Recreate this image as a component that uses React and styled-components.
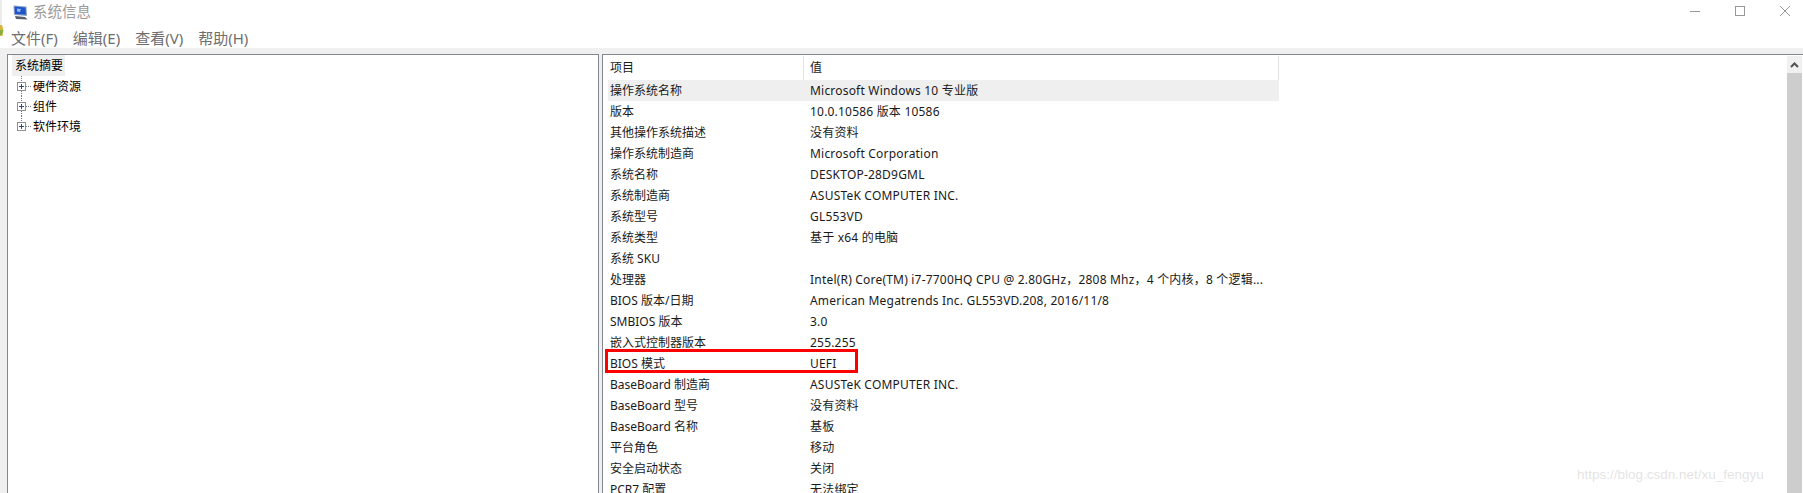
import React from "react";
import styled, { createGlobalStyle } from "styled-components";

const CJK = `"Noto Sans", "Noto Sans CJK SC", sans-serif`;

const rows = [
  ["操作系统名称", "Microsoft Windows 10 专业版"],
  ["版本", "10.0.10586 版本 10586"],
  ["其他操作系统描述", "没有资料"],
  ["操作系统制造商", "Microsoft Corporation"],
  ["系统名称", "DESKTOP-28D9GML"],
  ["系统制造商", "ASUSTeK COMPUTER INC."],
  ["系统型号", "GL553VD"],
  ["系统类型", "基于 x64 的电脑"],
  ["系统 SKU", ""],
  ["处理器", "Intel(R) Core(TM) i7-7700HQ CPU @ 2.80GHz，2808 Mhz，4 个内核，8 个逻辑..."],
  ["BIOS 版本/日期", "American Megatrends Inc. GL553VD.208, 2016/11/8"],
  ["SMBIOS 版本", "3.0"],
  ["嵌入式控制器版本", "255.255"],
  ["BIOS 模式", "UEFI"],
  ["BaseBoard 制造商", "ASUSTeK COMPUTER INC."],
  ["BaseBoard 型号", "没有资料"],
  ["BaseBoard 名称", "基板"],
  ["平台角色", "移动"],
  ["安全启动状态", "关闭"],
  ["PCR7 配置", "无法绑定"],
];

const tree = ["硬件资源", "组件", "软件环境"];
const menus = ["文件(F)", "编辑(E)", "查看(V)", "帮助(H)"];

const GlobalStyle = createGlobalStyle`
  html, body {
    margin: 0;
    padding: 0;
    background: #fff;
    overflow: hidden;
  }
`;

const Page = styled.div`
  width: 1803px;
  height: 493px;
  display: flex;
  flex-direction: column;
  overflow: hidden;
  position: relative;
  font-family: ${CJK};
  font-size: 12px;
  color: #1a1a1a;
`;

const TitleBar = styled.div`
  height: 24px;
  display: flex;
  align-items: center;
  padding-left: 13px;
  gap: 5px;
  flex: none;
`;

const Title = styled.span`
  font-size: 14.5px;
  line-height: 20px;
  padding-bottom: 2px;
  color: #9a9a9a;
`;

const WindowButtons = styled.div`
  margin-left: auto;
  display: flex;
  align-items: center;
  gap: 35px;
  padding: 0 13px 2px 0;
`;

const MenuBar = styled.div`
  height: 24px;
  display: flex;
  align-items: center;
  gap: 15px;
  padding: 3px 0 0 11px;
  box-sizing: border-box;
  flex: none;
  font-size: 15px;
  color: #6e6e6e;
`;

const Panes = styled.div`
  flex: 1;
  display: flex;
  gap: 3px;
  padding: 6px 0 0 7px;
  background: #f0f0f0;
  min-height: 0;
`;

const TreePane = styled.div`
  width: 592px;
  flex: none;
  background: #fff;
  border: solid #828790;
  border-width: 1px 1px 0 1px;
  padding-left: 4px;
  box-sizing: border-box;
`;

const TreeRoot = styled.div`
  width: fit-content;
  height: 21px;
  line-height: 21px;
  background: #efefef;
  color: #000;
  padding: 0 2px 0 3px;
`;

const TreeItem = styled.div`
  height: 20px;
  display: flex;
  align-items: center;
  color: #000;
`;

const Expander = styled.svg`
  width: 21px;
  height: 20px;
  flex: none;
`;

const ListPane = styled.div`
  flex: 1;
  display: flex;
  background: #fff;
  border: solid #828790;
  border-width: 1px 0 0 1px;
  min-width: 0;
`;

const Table = styled.div`
  width: 671px;
  padding: 1px 0 0 5px;
  flex: none;
`;

const HeaderRow = styled.div`
  display: grid;
  grid-template-columns: 196px 1fr;
  height: 24px;
  border-right: 1px solid #e0e0e0;
`;

const HeaderCell = styled.div`
  padding-left: ${(p) => (p.$divider ? "2px" : "6px")};
  line-height: 24px;
  border-right: ${(p) => (p.$divider ? "1px solid #e5e5e5" : "none")};
  color: #1a1a1a;
`;

const Row = styled.div`
  display: grid;
  grid-template-columns: 196px 1fr;
  height: 21px;
  line-height: 21px;
  background: ${(p) => (p.$selected ? "#efefef" : "transparent")};
`;

const Cell = styled.div`
  padding-left: ${(p) => (p.$value ? "6px" : "2px")};
  letter-spacing: ${(p) => (p.$value ? "0.2px" : "0")};
  white-space: nowrap;
  overflow: hidden;
`;

const Highlight = styled.div`
  position: absolute;
  left: 605px;
  top: 349px;
  width: 253px;
  height: 24px;
  box-sizing: border-box;
  border: 3px solid #f00;
`;

const ScrollBar = styled.div`
  margin: 1px 1px 0 auto;
  width: 15px;
  display: flex;
  flex-direction: column;
`;

const ScrollButton = styled.div`
  height: 17px;
  background: #f0f0f0;
  display: flex;
  align-items: center;
  justify-content: center;
`;

const ScrollThumb = styled.div`
  flex: 1;
  background: #cdcdcd;
`;

const Watermark = styled.div`
  position: absolute;
  left: 1577px;
  top: 467px;
  font-family: "Liberation Sans", sans-serif;
  font-size: 13.5px;
  color: rgba(215, 215, 215, 0.7);
`;

const DesktopPeek = styled.svg`
  position: absolute;
  left: 0;
  top: 0;
  width: 4px;
  height: 40px;
`;

const AppIcon = () => (
  <svg width="15" height="15" viewBox="0 0 15 15">
    <path d="M0.5 0.5L13.5 1.5L14 11L1 10z" fill="#8fa3c4" />
    <path d="M1.5 1.5L12.5 2.5L13 9.8L2 9z" fill="#1f55c8" />
    <path d="M4 3.5L8 4L7 7L4 6.5z" fill="#8fb8f0" />
    <path d="M2 11L12 12L14.5 14.5L3 14z" fill="#5a606c" />
  </svg>
);

const MinimizeIcon = () => (
  <svg width="10" height="10" viewBox="0 0 10 10">
    <path d="M0 5.5h10" stroke="#999" fill="none" />
  </svg>
);

const MaximizeIcon = () => (
  <svg width="10" height="10" viewBox="0 0 10 10">
    <rect x="0.5" y="0.5" width="9" height="9" stroke="#999" fill="none" />
  </svg>
);

const CloseIcon = () => (
  <svg width="10" height="10" viewBox="0 0 10 10">
    <path d="M0 0l10 10M10 0L0 10" stroke="#999" fill="none" />
  </svg>
);

const PlusBox = ({ last }) => (
  <Expander viewBox="0 0 21 20">
    <path d={last ? "M9.5 0v6" : "M9.5 0v6M9.5 15v5"} stroke="#777" strokeDasharray="1 1" />
    <rect x="5.5" y="6.5" width="8" height="8" fill="#fff" stroke="#8e8f8f" />
    <path d="M7 10.5h5M9.5 8v5" stroke="#2d4a8a" />
    <path d="M14 10.5h5" stroke="#777" strokeDasharray="1 1" />
  </Expander>
);

export default function App() {
  return (
    <Page>
      <GlobalStyle />
      <TitleBar>
        <AppIcon />
        <Title>系统信息</Title>
        <WindowButtons>
          <MinimizeIcon />
          <MaximizeIcon />
          <CloseIcon />
        </WindowButtons>
      </TitleBar>
      <MenuBar>
        {menus.map((m) => (
          <span key={m}>{m}</span>
        ))}
      </MenuBar>
      <Panes>
        <TreePane>
          <TreeRoot>系统摘要</TreeRoot>
          {tree.map((t, i) => (
            <TreeItem key={t}>
              <PlusBox last={i === tree.length - 1} />
              {t}
            </TreeItem>
          ))}
        </TreePane>
        <ListPane>
          <Table>
            <HeaderRow>
              <HeaderCell $divider>项目</HeaderCell>
              <HeaderCell>值</HeaderCell>
            </HeaderRow>
            {rows.map(([k, v], i) => (
              <Row key={k} $selected={i === 0}>
                <Cell>{k}</Cell>
                <Cell $value>{v}</Cell>
              </Row>
            ))}
          </Table>
          <ScrollBar>
            <ScrollButton>
              <svg width="9" height="6" viewBox="0 0 9 6">
                <path d="M1 5l3.5-3.5L8 5" stroke="#505050" strokeWidth="2" fill="none" />
              </svg>
            </ScrollButton>
            <ScrollThumb />
          </ScrollBar>
        </ListPane>
      </Panes>
      <DesktopPeek viewBox="0 0 4 40">
        <rect x="0" y="0" width="2" height="25" fill="#ececec" />
        <path d="M0 25h2l1.5 5-1 6H0z" fill="#d8b83c" />
        <path d="M0 30h3l-1 5H0z" fill="#7fb04a" />
      </DesktopPeek>
      <Highlight />
      <Watermark>https://blog.csdn.net/xu_fengyu</Watermark>
    </Page>
  );
}
